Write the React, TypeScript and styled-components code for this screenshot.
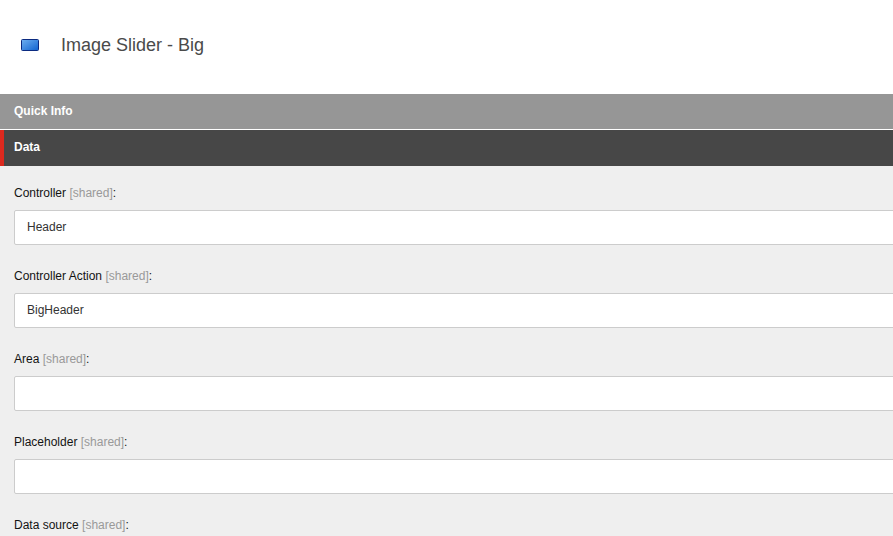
import React from "react";
import styled, { createGlobalStyle } from "styled-components";

const Global = createGlobalStyle`
  html, body { margin: 0; padding: 0; height: 536px; overflow: hidden; background: #fff; }
  body { font-family: "Liberation Sans", Arial, sans-serif; font-size: 12px; }
`;

const Page = styled.div`
  width: 893px;
  height: 536px;
  overflow: hidden;
  display: flex;
  flex-direction: column;
`;

const Header = styled.header`
  height: 94px;
  flex: none;
  display: flex;
  align-items: center;
  gap: 22px;
  padding: 0 0 4px 21px;
  box-sizing: border-box;
  background: #fff;
`;

const Title = styled.h1`
  margin: 0;
  font-size: 18px;
  font-weight: 400;
  color: #4a4a4a;
`;

const SectionBar = styled.div<{ $active?: boolean }>`
  flex: none;
  box-sizing: border-box;
  height: ${(p) => (p.$active ? "36px" : "35px")};
  margin-bottom: ${(p) => (p.$active ? "0" : "1px")};
  display: flex;
  align-items: center;
  padding-left: ${(p) => (p.$active ? "10px" : "14px")};
  padding-bottom: 2px;
  border-left: ${(p) => (p.$active ? "4px solid #dc291e" : "none")};
  background: ${(p) => (p.$active ? "#474747" : "#969696")};
  color: #fff;
  font-size: 12px;
  font-weight: 700;
`;

const Body = styled.div`
  flex: 1;
  background: #efefef;
  padding: 20px 0 0 14px;
  display: flex;
  flex-direction: column;
  overflow: hidden;
`;

const Field = styled.div`
  flex: none;
  display: flex;
  flex-direction: column;
  height: 83px;
`;

const Label = styled.label`
  height: 14px;
  line-height: 14px;
  margin-bottom: 10px;
  color: #131313;
`;

const Shared = styled.span`
  color: #999;
`;

const Input = styled.div`
  box-sizing: border-box;
  width: 1100px;
  height: 35px;
  display: flex;
  align-items: center;
  padding: 0 0 2px 12px;
  background: #fff;
  border: 1px solid #ccc;
  border-radius: 2px;
  color: #333;
`;

const fields = [
  { label: "Controller", value: "Header" },
  { label: "Controller Action", value: "BigHeader" },
  { label: "Area", value: "" },
  { label: "Placeholder", value: "" },
  { label: "Data source", value: "" },
];

const SliderIcon = () => (
  <svg width="18" height="12" viewBox="0 0 18 12" aria-hidden="true">
    <defs>
      <linearGradient id="slider-fill" x1="0" y1="0" x2="1" y2="1">
        <stop offset="0" stopColor="#6fb0f0" />
        <stop offset="1" stopColor="#0f62d0" />
      </linearGradient>
    </defs>
    <rect x="0.5" y="0.5" width="17" height="11" rx="1" fill="url(#slider-fill)" stroke="#0b2a80" />
  </svg>
);

export default function App() {
  return (
    <Page>
      <Global />
      <Header>
        <SliderIcon />
        <Title>Image Slider - Big</Title>
      </Header>
      <SectionBar>Quick Info</SectionBar>
      <SectionBar $active>Data</SectionBar>
      <Body>
        {fields.map((f) => (
          <Field key={f.label}>
            <Label>
              {f.label} <Shared>[shared]</Shared>:
            </Label>
            <Input>{f.value}</Input>
          </Field>
        ))}
      </Body>
    </Page>
  );
}
